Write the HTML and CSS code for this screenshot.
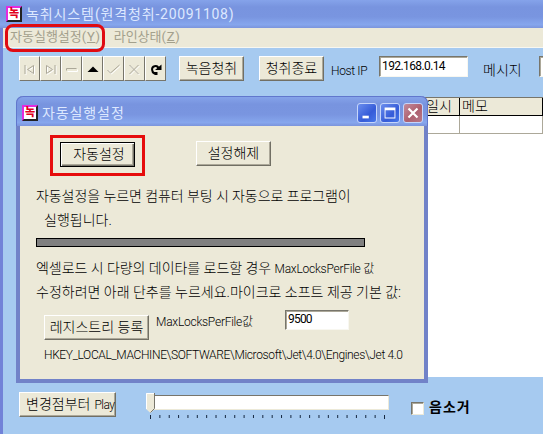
FILE: index.html
```html
<!DOCTYPE html>
<html lang="ko">
<head>
<meta charset="utf-8">
<title>녹취시스템</title>
<link rel="stylesheet" href="styles.css">
</head>
<body>
<div class="window">
  <header class="titlebar main-title"><span class="app-icon">녹</span><span class="title-text">녹취시스템<span class="title-latin">(</span>원격청취<span class="title-latin">-20091108)</span></span></header>
  <nav class="menubar"><span class="menu-item">자동실행설정<span class="lat">(<u>Y</u>)</span></span><span class="menu-item second">라인상태<span class="lat">(<u>Z</u>)</span></span></nav>
  <div class="toolbar">
    <div class="navigator">
      <button><svg viewBox="0 0 18 22"><path class="hi" d="M5.5 8v9M14 8.500L8 12.500l6 4z"/><path class="dim" d="M4.500 7v9M13 7.500L7 11.500l6 4z"/></svg></button>
      <button><svg viewBox="0 0 18 22"><path class="hi" d="M14.500 8v9M6 8.500l6 4-6 4z"/><path class="dim" d="M13.500 7v9M5 7.500l6 4-6 4z"/></svg></button>
      <button><svg viewBox="0 0 18 22"><path class="hi" d="M5 13.500h10v-2"/><path class="dim" d="M4 12.500v-2h10"/></svg></button>
      <button><svg viewBox="0 0 18 22"><path class="solid" d="M4 14L9.500 8.500 15 14z"/></svg></button>
      <button><svg viewBox="0 0 18 22"><path class="hi" d="M4 12l3 4 9-8"/><path class="dim" d="M3 12l3 3 9-8"/></svg></button>
      <button><svg viewBox="0 0 18 22"><path class="hi" d="M5 8l9 9M14 8l-9 9"/><path class="dim" d="M4 7l9 9M13 7l-9 9"/></svg></button>
      <button><svg viewBox="0 0 18 22"><path class="turn" d="M8 15.500C5 14 4.500 9 8 8.200c2-.5 3.500.4 4 2.300"/><path class="solid" d="M8.500 12H15V6.500zM7 14h4v3H8z"/></svg></button>
    </div>
    <button class="btn listen">녹음청취</button>
    <button class="btn stop">청취종료</button>
    <span class="host-label">Host IP</span>
    <div class="field host">192.168.0.14</div>
    <span class="msg-label">메시지</span>
    <div class="field msg"></div>
  </div>
  <div class="grid">
    <div class="cell head date">일시</div><div class="cell head">메모</div>
    <div class="cell date"></div><div class="cell"></div>
  </div>
  <footer class="bottom">
    <button class="btn play">변경점부터<span class="play-latin">Play</span></button>
    <div class="slider">
      <div class="track"></div>
      <svg class="ticks" viewBox="0 0 242 5"><path d="M3.500 0v4m9.360-4v3m9.360-3v3m9.360-3v3m9.360-3v3m9.360-3v3m9.360-3v3m9.360-3v3m9.360-3v3m9.360-3v3m9.360-3v3m9.360-3v3m9.360-3v3m9.360-3v3m9.360-3v3m9.360-3v3m9.360-3v3m9.360-3v3m9.360-3v3m9.360-3v3m9.360-3v3m9.360-3v3m9.360-3v3m9.360-3v3m9.360-3v3m9.360-3v4"/></svg>
      <svg class="thumb" viewBox="0 0 9 20"><path fill="#ece9d8" d="M0 0h9v16l-4.500 4L0 16z"/><path fill="none" stroke="#fff" d="M.5 16V.5H8"/><path fill="none" stroke="#77756b" d="M8.500 0v15.500l-4 4"/></svg>
    </div>
    <span class="check"></span><b class="mute">음소거</b>
  </footer>
</div>
<span class="mark-menu"></span>

<section class="dialog">
  <header class="titlebar dialog-title">
    <span class="app-icon">녹</span><span class="title-text">자동실행설정</span>
    <div class="controls">
      <span class="ctl"><svg viewBox="0 0 20 20"><path fill="#fff" d="M5 13h7v3H5z"/></svg></span>
      <span class="ctl"><svg viewBox="0 0 20 20"><path fill="#fff" fill-rule="evenodd" d="M4 4h12v12H4zm1 3v8h10V7z"/></svg></span>
      <span class="ctl close"><svg viewBox="0 0 20 20"><path stroke="#fff" stroke-width="2.400" d="M5 5l10 10M15 5L5 15"/></svg></span>
    </div>
  </header>
  <div class="dialog-body">
    <div class="actions"><div class="mark-button"><button class="btn default">자동설정</button></div><button class="btn release">설정해제</button></div>
    <p class="l1">자동설정을 누르면 컴퓨터 부팅 시 자동으로 프로그램이</p>
    <p class="l2">실행됩니다.</p>
    <div class="bar"></div>
    <p class="l3">엑셀로드 시 다량의 데이타를 로드할 경우 <span class="small">MaxLocksPerFile 값</span></p>
    <p class="l4">수정하려면 아래 단추를 누르세요.마이크로 소프트 제공 기본 값:</p>
    <div class="registry"><button class="btn reg">레지스트리 등록</button><span class="small reg-label">MaxLocksPerFile값</span><div class="field value">9500</div></div>
    <p class="path">HKEY_LOCAL_MACHINE\SOFTWARE\Microsoft\Jet\4.0\Engines\Jet 4.0</p>
  </div>
</section>
</body>
</html>
```
FILE: styles.css
```css
* { box-sizing: border-box; }
body { margin: 0; width: 543px; height: 434px; overflow: hidden; position: relative; background: #a6caf0; color: #000; font: 300 14px/18px Roboto, "Noto Sans CJK KR", sans-serif; white-space: nowrap; }
button { font: inherit; color: inherit; padding: 0; margin: 0; border: 0; }
svg { display: block; }
p { margin: 0; }
.window { height: 434px; border-left: 3px solid #7182d8; display: flex; flex-direction: column; }
.titlebar { display: flex; align-items: center; color: #dde8ff; background: linear-gradient(#85a3ea, #7894df 25%, #7995e0 60%, #86a6ed 88%, #7b94dc); }
.main-title { height: 28px; flex: none; margin-left: -3px; padding-left: 6px; }
.app-icon { width: 16px; height: 16px; flex: none; border: 2px solid #e42be0; border-right-color: #222; border-bottom-color: #222; background: #fff; color: #e1001c; font-weight: 900; font-size: 11px; line-height: 11px; text-align: center; }
.title-text { margin-left: 4px; font-size: 14px; font-weight: 400; letter-spacing: .9px; }
.title-latin { letter-spacing: .7px; }
.menubar { height: 20px; flex: none; background: #ece9d8; border-bottom: 1px solid #f8f7f0; color: #a3a08c; padding-left: 7px; display: flex; font-weight: 400; font-size: 13px; line-height: 18px; }
.second { margin-left: 13px; }
.lat { letter-spacing: .7px; }
.toolbar { height: 49px; flex: none; padding: 8px 0 0 16px; display: flex; align-items: flex-start; }
.navigator { display: flex; width: 147px; height: 25px; }
.navigator button { width: 21px; height: 25px; background: #ece9d8; border: 1px solid; border-color: #fff #77756b #77756b #fff; }
.navigator svg { width: 19px; height: 22px; }
.hi, .dim, .turn { fill: none; stroke: #fff; }
.dim { stroke: #aca899; }
.turn { stroke: #000; stroke-width: 2; }
.solid { fill: #000; }
.btn { height: 25px; flex: none; background: #ece9d8; border: 1px solid; border-color: #fff #716f64 #716f64 #fff; box-shadow: inset -1px -1px #aca899; font-size: 14px; line-height: 21px; }
.listen { width: 65px; margin-left: 13px; }
.stop { width: 65px; margin-left: 15px; }
.host-label { width: 48px; flex: none; padding-left: 7px; margin-top: 6px; font-size: 12px; letter-spacing: -.35px; }
.field { background: #fff; border: 1px solid; border-color: #77756b #f8f7f0 #f8f7f0 #77756b; box-shadow: inset 1px 1px #aca899; font-size: 12px; font-weight: 400; line-height: 18px; padding-left: 2px; flex: none; letter-spacing: -.6px; }
.host { width: 89px; height: 21px; margin-left: 7px; }
.msg-label { width: 56px; margin-left: 15px; margin-top: 5px; flex: none; }
.msg { width: auto; flex: 1; min-width: 0; height: 21px; border-right: 0; }
.grid { height: 280px; flex: none; margin-left: 16px; background: #fff; border-top: 1px solid #77756b; display: grid; grid-template-columns: 441px 1fr; grid-template-rows: 18px 18px 1fr; align-content: start; }
.cell { border-right: 1px solid #aca899; border-bottom: 1px solid #aca899; }
.head { background: #ece9d8; border-color: #000; padding-left: 2px; line-height: 17px; }
.date.head { padding-left: 407px; }
.bottom { flex: 1; display: flex; align-items: flex-start; padding: 15px 0 0 16px; }
.play { width: 97px; text-align: left; padding-left: 6px; }
.play-latin { font-size: 12px; margin-left: 4px; letter-spacing: -.5px; }
.slider { width: 242px; height: 28px; margin-left: 31px; position: relative; padding-top: 3px; }
.track { height: 15px; margin-left: 2px; background: #fff; border: 1px solid; border-color: #77756b #ece9d8 #ece9d8 #77756b; }
.ticks { width: 242px; height: 5px; margin-top: 5px; stroke: #162840; }
.thumb { position: absolute; left: -1px; top: 1px; width: 9px; height: 20px; }
.check { width: 13px; height: 13px; margin: 10px 0 0 22px; background: #fff; border: 1px solid; border-color: #77756b #ece9d8 #ece9d8 #77756b; box-shadow: inset 1px 1px #aca899; }
.mute { font-weight: 700; margin: 6px 0 0 5px; letter-spacing: 1px; }
.mark-menu { position: absolute; left: 5px; top: 24px; width: 100px; height: 28px; border: 3px solid #e00b12; border-radius: 8px; }
.dialog { position: absolute; left: 16px; top: 96px; width: 412px; height: 287px; background: #ece9d8; border: 4px solid #7182c8; border-top: 0; border-radius: 7px 7px 0 0; }
.dialog-title { height: 30px; margin: 0 -4px; padding: 2px 4px 0 5px; border-radius: 7px 7px 0 0; border: 1px solid #6177cd; border-bottom: 0; }
.controls { display: flex; gap: 3px; margin-left: auto; }
.ctl { width: 20px; height: 20px; border: 1px solid #c5d5fb; border-radius: 3px; background: linear-gradient(135deg, #6b8eee, #355bd8 60%, #4778ea); }
.ctl svg { width: 18px; height: 18px; }
.close { background: linear-gradient(135deg, #c48b9c, #ad606f 55%, #b77888); }
.dialog-body { padding-left: 16px; }
.actions { display: flex; align-items: flex-start; height: 61px; padding: 9px 0 0 14px; }
.mark-button { width: 95px; height: 41px; border: 3px solid #e60c0c; padding: 4px 0 0 7px; }
.default { display: block; width: 75px; border: 1px solid #000; box-shadow: inset 1px 1px #fff, inset -1px -1px #77756b, inset -2px -2px #aca899; padding-left: 3px; }
.release { width: 75px; margin: 6px 0 0 51px; }
.l1, .l2, .l3, .l4 { font-size: 14px; height: 24px; line-height: 18px; }
.l1 { letter-spacing: -.07px; }
.l2 { padding-left: 8px; }
.bar { width: 329px; height: 9px; margin-top: 3px; background: #808080; border: 1px solid #000; }
.l3 { margin-top: 12px; letter-spacing: -.04px; }
.small { font-size: 12px; letter-spacing: -.25px; }
.registry { display: flex; align-items: flex-start; height: 39px; padding-left: 8px; }
.reg { width: 105px; margin-top: 8px; }
.reg-label { margin: 6px 0 0 7px; width: 129px; }
.value { width: 64px; height: 20px; margin-top: 1px; }
.registry .value { margin-top: 0; position: relative; top: 3px; line-height: 17px; letter-spacing: -.8px; }
.path { font-size: 12px; padding-left: 8px; line-height: 18px; letter-spacing: -.35px; }
```
